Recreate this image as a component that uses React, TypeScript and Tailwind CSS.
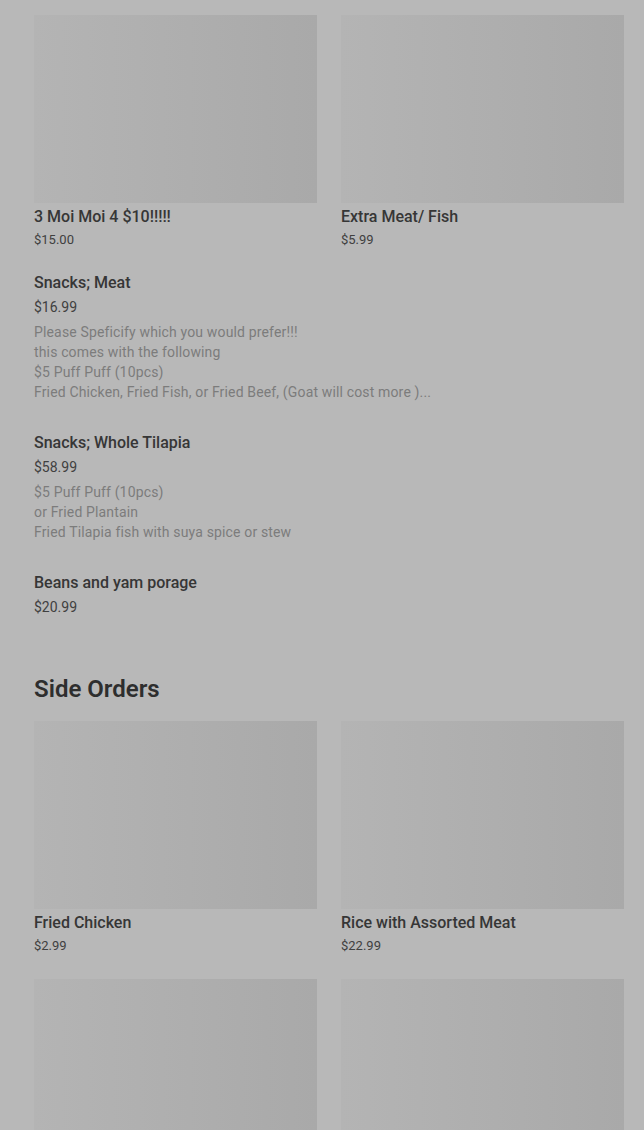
import React from 'react';

type Item = { name: string; price: string; lines?: string[] };

const topCards: Item[] = [
  { name: '3 Moi Moi 4 $10!!!!!', price: '$15.00' },
  { name: 'Extra Meat/ Fish', price: '$5.99' },
];

const listItems: Item[] = [
  {
    name: 'Snacks; Meat',
    price: '$16.99',
    lines: [
      'Please Speficify which you would prefer!!!',
      'this comes with the following',
      '$5 Puff Puff (10pcs)',
      'Fried Chicken, Fried Fish, or Fried Beef, (Goat will cost more )...',
    ],
  },
  {
    name: 'Snacks; Whole Tilapia',
    price: '$58.99',
    lines: ['$5 Puff Puff (10pcs)', 'or Fried Plantain', 'Fried Tilapia fish with suya spice or stew'],
  },
  { name: 'Beans and yam porage', price: '$20.99' },
];

const sideCards: Item[] = [
  { name: 'Fried Chicken', price: '$2.99' },
  { name: 'Rice with Assorted Meat', price: '$22.99' },
  { name: '', price: '' },
  { name: '', price: '' },
];

const Card: React.FC<{ item: Item }> = ({ item }) => (
  <div>
    <div className="h-[188px] bg-gradient-to-r from-[#b4b4b4] to-[#a9a9a9]"></div>
    {item.name && (
      <>
        <p className="mt-[4px] text-[16px] leading-5 font-medium text-[#363636]">{item.name}</p>
        <p className="mt-[4px] text-[13px] leading-[18px] text-[#404040]">{item.price}</p>
      </>
    )}
  </div>
);

export default function App() {
  return (
    <div
      className="min-h-[1130px] bg-[#b8b8b8] pl-[34px] pr-[20px] pt-[15px] overflow-hidden"
      style={{ fontFamily: 'Roboto, "Liberation Sans", sans-serif' }}
    >
      <div className="grid grid-cols-2 gap-6">
        {topCards.map((c) => (
          <Card key={c.name} item={c} />
        ))}
      </div>

      <div className="mt-6 flex flex-col gap-[31px]">
        {listItems.map((it) => (
          <div key={it.name}>
            <p className="text-[16px] leading-5 font-medium text-[#363636]">{it.name}</p>
            <p className="mt-[4px] text-[14px] leading-5 text-[#404040]">{it.price}</p>
            {it.lines && (
              <div className="mt-[5px] text-[14px] leading-5 tracking-[0.15px] text-[#7c7c7c]">
                {it.lines.map((l) => (
                  <p key={l}>{l}</p>
                ))}
              </div>
            )}
          </div>
        ))}
      </div>

      <h2 className="mt-[56px] text-[24px] leading-8 font-semibold text-[#2e2e2e]">Side Orders</h2>

      <div className="mt-4 grid grid-cols-2 gap-x-6 gap-y-6">
        {sideCards.map((c, i) => (
          <Card key={i} item={c} />
        ))}
      </div>
    </div>
  );
}
